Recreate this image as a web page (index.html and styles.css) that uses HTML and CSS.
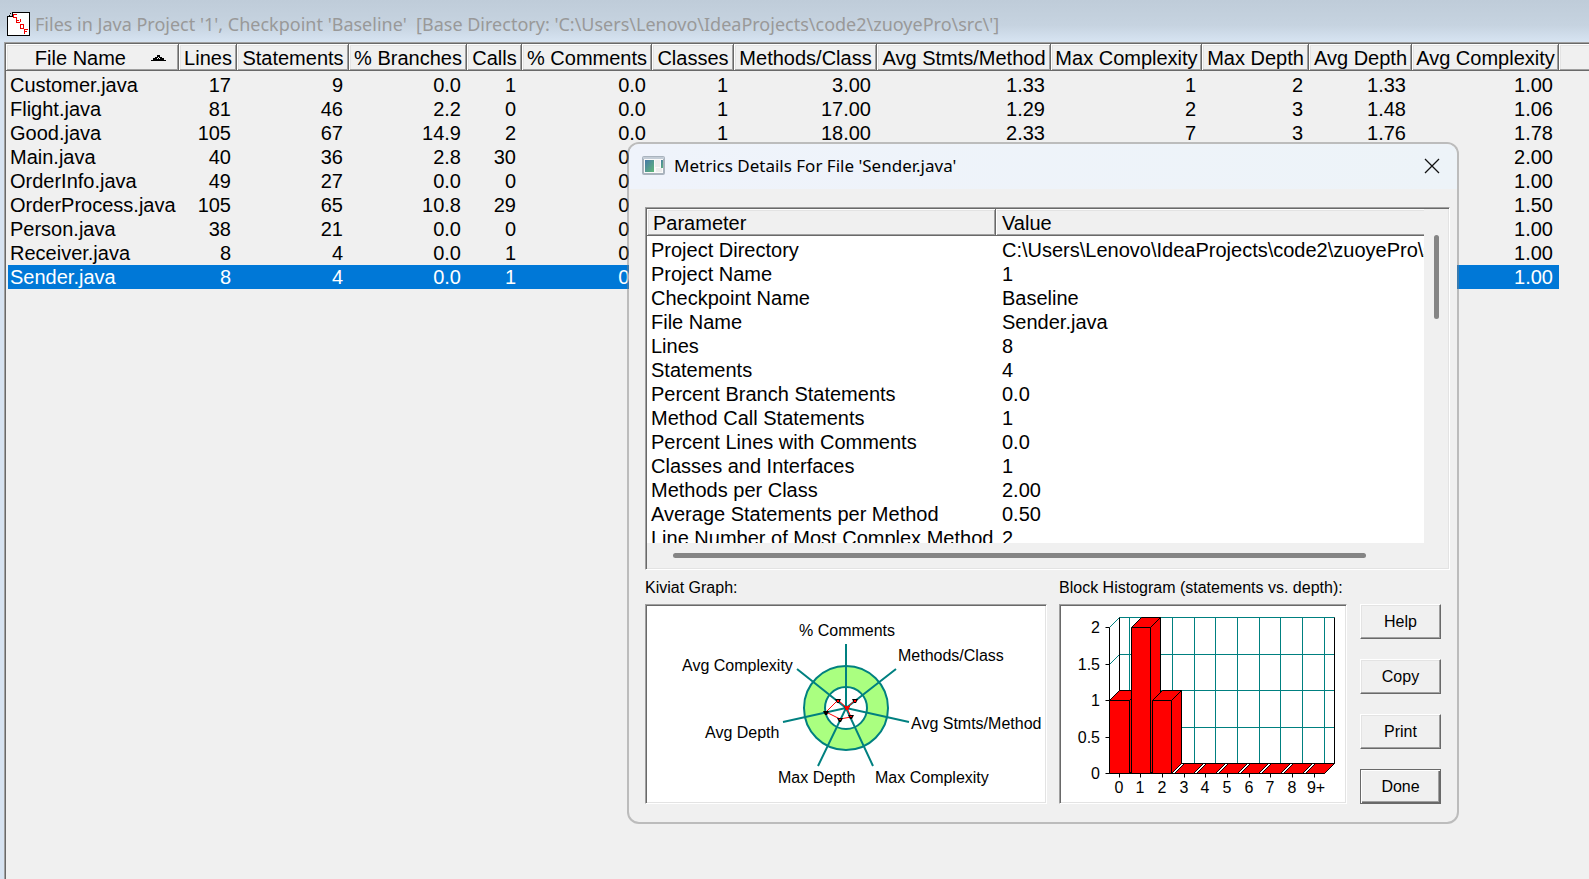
FILE: index.html
```html
<!DOCTYPE html>
<html lang="en">
<head>
  <meta charset="UTF-8" />
  <meta name="viewport" content="width=device-width, initial-scale=1.0"/>
  <title>Files in Java Project '1'</title>
  <link rel="stylesheet" href="styles.css">
</head>
<body>
  <main class="window">
    <header class="window-title">
      <svg class="file-icon" width="23" height="24" viewBox="0 0 23 24" shape-rendering="crispEdges">
        <path d="M5.5 .5H22.5V23.5H.5V4.500H5.500Z" fill="#fff" stroke="#000"/>
        <path d="M3 1h1v1H3zM2 3h1v1H2z" fill="#000"/>
        <path d="M10 2.500H6.500V5.500H10M9.500 6V10.500H13M10 8.500H12M13 7V10M13.500 12.500H16V16.500H13.500ZM17.500 22V17.500H20.500M18 19.500H20" fill="none" stroke="#f00000"/>
      </svg>
      <h1>Files in Java Project '1', Checkpoint 'Baseline'&nbsp; [Base Directory: 'C:\Users\Lenovo\IdeaProjects\code2\zuoyePro\src\']</h1>
    </header>

    <section class="files">
      <table class="file-table">
        <colgroup>
          <col class="c-name"><col class="c-lines"><col class="c-stmts"><col class="c-branch"><col class="c-calls">
          <col class="c-comm"><col class="c-class"><col class="c-meth"><col class="c-avgst"><col class="c-maxc">
          <col class="c-maxd"><col class="c-avgd"><col class="c-avgc"><col>
        </colgroup>
        <thead>
          <tr>
            <th>
              <div class="sorted">File Name
                <svg width="16" height="6" viewBox="0 0 16 6" shape-rendering="crispEdges">
                  <path d="M0 6h15V5h-2V3h-2V2H9V0H6v2H4v1H2v2H0z" fill="#000"/>
                  <path d="M7 2h1v1H7zM6 3h1v1H6zM8 3h1v1H8z" fill="#fff"/>
                </svg>
              </div>
            </th>
            <th>Lines</th><th>Statements</th><th>% Branches</th><th>Calls</th><th>% Comments</th><th>Classes</th>
            <th>Methods/Class</th><th>Avg Stmts/Method</th><th>Max Complexity</th><th>Max Depth</th><th>Avg Depth</th><th>Avg Complexity</th>
            <th class="filler"></th>
          </tr>
        </thead>
        <tbody>
          <tr><td>Customer.java</td><td>17</td><td>9</td><td>0.0</td><td>1</td><td>0.0</td><td>1</td><td>3.00</td><td>1.33</td><td>1</td><td>2</td><td>1.33</td><td>1.00</td></tr>
          <tr><td>Flight.java</td><td>81</td><td>46</td><td>2.2</td><td>0</td><td>0.0</td><td>1</td><td>17.00</td><td>1.29</td><td>2</td><td>3</td><td>1.48</td><td>1.06</td></tr>
          <tr><td>Good.java</td><td>105</td><td>67</td><td>14.9</td><td>2</td><td>0.0</td><td>1</td><td>18.00</td><td>2.33</td><td>7</td><td>3</td><td>1.76</td><td>1.78</td></tr>
          <tr><td>Main.java</td><td>40</td><td>36</td><td>2.8</td><td>30</td><td>0.0</td><td></td><td></td><td></td><td></td><td></td><td></td><td>2.00</td></tr>
          <tr><td>OrderInfo.java</td><td>49</td><td>27</td><td>0.0</td><td>0</td><td>0.0</td><td></td><td></td><td></td><td></td><td></td><td></td><td>1.00</td></tr>
          <tr><td>OrderProcess.java</td><td>105</td><td>65</td><td>10.8</td><td>29</td><td>0.0</td><td></td><td></td><td></td><td></td><td></td><td></td><td>1.50</td></tr>
          <tr><td>Person.java</td><td>38</td><td>21</td><td>0.0</td><td>0</td><td>0.0</td><td></td><td></td><td></td><td></td><td></td><td></td><td>1.00</td></tr>
          <tr><td>Receiver.java</td><td>8</td><td>4</td><td>0.0</td><td>1</td><td>0.0</td><td></td><td></td><td></td><td></td><td></td><td></td><td>1.00</td></tr>
          <tr class="selected"><td>Sender.java</td><td>8</td><td>4</td><td>0.0</td><td>1</td><td>0.0</td><td></td><td></td><td></td><td></td><td></td><td></td><td>1.00</td></tr>
        </tbody>
      </table>
    </section>
  </main>

  <div class="dialog" role="dialog" aria-labelledby="dialogTitle">
    <header class="dialog-title">
      <svg width="23" height="19" viewBox="0 0 23 19">
        <defs>
          <linearGradient id="pane" x1="0" y1="0" x2="1" y2="1">
            <stop offset="0" stop-color="#4678a8"/>
            <stop offset="1" stop-color="#5fb878"/>
          </linearGradient>
        </defs>
        <rect x="1" y="1" width="21" height="17" rx="1" fill="#fafafa" stroke="#a9b3bd" stroke-width="2"/>
        <path d="M1 2h21" stroke="#c3ccd6" stroke-width="2"/>
        <rect x="3" y="4" width="9" height="12" fill="url(#pane)"/>
        <path d="M13 4h5v7h-5zM14 12h6v4h-6z" fill="#ececec"/>
        <path d="M19 4h2v8h-2z" fill="url(#pane)"/>
      </svg>
      <h2 id="dialogTitle">Metrics Details For File 'Sender.java'</h2>
      <button class="close" aria-label="Close">
        <svg width="16" height="16" viewBox="0 0 16 16"><path d="M1 1l14 14M15 1L1 15" stroke="#111" stroke-width="1.300" fill="none"/></svg>
      </button>
    </header>

    <div class="dialog-body">
      <div class="details">
        <div class="details-view">
          <table class="details-table">
            <colgroup><col class="c-param"><col></colgroup>
            <thead><tr><th>Parameter</th><th>Value</th></tr></thead>
            <tbody>
              <tr><td>Project Directory</td><td>C:\Users\Lenovo\IdeaProjects\code2\zuoyePro\src\</td></tr>
              <tr><td>Project Name</td><td>1</td></tr>
              <tr><td>Checkpoint Name</td><td>Baseline</td></tr>
              <tr><td>File Name</td><td>Sender.java</td></tr>
              <tr><td>Lines</td><td>8</td></tr>
              <tr><td>Statements</td><td>4</td></tr>
              <tr><td>Percent Branch Statements</td><td>0.0</td></tr>
              <tr><td>Method Call Statements</td><td>1</td></tr>
              <tr><td>Percent Lines with Comments</td><td>0.0</td></tr>
              <tr><td>Classes and Interfaces</td><td>1</td></tr>
              <tr><td>Methods per Class</td><td>2.00</td></tr>
              <tr><td>Average Statements per Method</td><td>0.50</td></tr>
              <tr><td>Line Number of Most Complex Method</td><td>2</td></tr>
            </tbody>
          </table>
        </div>
        <div class="scroll-v"><div class="thumb"></div></div>
        <div class="scroll-h"><div class="thumb"></div></div>
      </div>

      <div class="bottom">
        <figure class="kiviat">
          <figcaption>Kiviat Graph:</figcaption>
          <div class="plot">
            <svg width="398" height="196" viewBox="0 0 398 196">
              <circle cx="199" cy="102" r="42" fill="#aaff80" stroke="#008080" stroke-width="2"/>
              <circle cx="199" cy="102" r="21" fill="#fff" stroke="#008080" stroke-width="2"/>
              <path d="M199 38V102M249 63L199 102L262 116M226 160L199 102L171 160M136 116L199 102L150 63" fill="none" stroke="#008080" stroke-width="2"/>
              <path d="M200 102L208 94L200 102L204 111L193 113L179 106L191 94Z" fill="none" stroke="#f00" stroke-width="1"/>
              <g fill="#000">
                <path d="M188 93h6l-2 4h-2zM205 93h6l-2 4h-2zM176 105h6l-2 4h-2zM190 112h6l-2 4h-2zM201 109h6l-2 4h-2zM197 100h6l-2 4h-2z"/>
              </g>
              <path d="M197 100h6l-2 4h-2zM190 94h2v2h-2zM207 94h2v2h-2zM192 113h2v1h-2zM203 110h2v1h-2z" fill="#f00"/>
              <text x="152" y="30">% Comments</text>
              <text x="251" y="55">Methods/Class</text>
              <text x="35" y="65">Avg Complexity</text>
              <text x="264" y="123">Avg Stmts/Method</text>
              <text x="58" y="132">Avg Depth</text>
              <text x="131" y="177">Max Depth</text>
              <text x="228" y="177">Max Complexity</text>
            </svg>
          </div>
        </figure>

        <figure class="histogram">
          <figcaption>Block Histogram (statements vs. depth):</figcaption>
          <div class="plot">
            <svg width="284" height="196" viewBox="0 0 284 196">
              <g transform="translate(.5 .5)">
                <!-- back wall grid -->
                <path d="M58 11H273M58 48H273M58 84H273M58 121H273M68 11V157M90 11V157M111 11V157M133 11V157M154 11V157M176 11V157M198 11V157M219 11V157M241 11V157M263 11V157M48 21L58 11M48 58L58 48" fill="none" stroke="#008080"/>
                <!-- axes and ticks -->
                <path d="M58 11V157H273V11M48 21V167H263L273 157M44 21H48M44 58H48M44 94H48M44 131H48M44 167H48M58 167V171M79 167V171M101 167V171M123 167V171M144 167V171M166 167V171M188 167V171M209 167V171M231 167V171M253 167V171" fill="none" stroke="#000"/>
                <g fill="#f00" stroke="#000" stroke-linejoin="round">
                  <path d="M48 167V94L58 84H78V157L68 167ZM48 94H68V167M68 94L78 84"/>
                  <path d="M70 167V21L80 11H99V157L89 167ZM70 21H89V167M89 21L99 11"/>
                  <path d="M91 167V94L101 84H120V157L110 167ZM91 94H110V167M110 94L120 84"/>
                  <path d="M113 167L123 157H142L132 167ZM135 167L145 157H164L154 167ZM157 167L167 157H186L176 167ZM179 167L189 157H207L197 167ZM200 167L210 157H229L219 167ZM222 167L232 157H251L241 167ZM244 167L254 157H273L263 167Z"/>
                </g>
              </g>
              <g text-anchor="end">
                <text x="39" y="27">2</text>
                <text x="39" y="64">1.5</text>
                <text x="39" y="100">1</text>
                <text x="39" y="137">0.5</text>
                <text x="39" y="173">0</text>
              </g>
              <g text-anchor="middle">
                <text x="58" y="187">0</text>
                <text x="79" y="187">1</text>
                <text x="101" y="187">2</text>
                <text x="123" y="187">3</text>
                <text x="144" y="187">4</text>
                <text x="166" y="187">5</text>
                <text x="188" y="187">6</text>
                <text x="209" y="187">7</text>
                <text x="231" y="187">8</text>
                <text x="255" y="187">9+</text>
              </g>
            </svg>
          </div>
        </figure>

        <div class="buttons">
          <button>Help</button>
          <button>Copy</button>
          <button>Print</button>
          <button class="default">Done</button>
        </div>
      </div>
    </div>
  </div>
</body>
</html>
```
FILE: styles.css
```css
* {
  box-sizing: border-box;
}

body {
  margin: 0;
  height: 100vh;
  overflow: hidden;
  background: #d7e3f1;
  color: #000;
  font-family: "Liberation Sans", Arial, sans-serif;
  font-size: 20px;
}

h1, h2, figure {
  margin: 0;
  font-weight: normal;
}

.window {
  display: flex;
  flex-direction: column;
  height: 100%;
}

.window-title {
  display: flex;
  align-items: center;
  gap: 5px;
  height: 42px;
  padding: 6px 7px 0;
  background: linear-gradient(#bfccd9, #c6d3e0 60%, #d7e4f2);
}

.window-title h1 {
  color: #999;
  font-family: "Noto Sans", "Open Sans", sans-serif;
  font-size: 18px;
  white-space: nowrap;
}

.files {
  flex: 1;
  margin-left: 4px;
  border-top: 1px solid #a0a0a0;
  border-left: 1px solid #a0a0a0;
  background: #f0f0f0;
  box-shadow: inset 1px 1px #696969;
  padding: 1px 0 0 1px;
  overflow: hidden;
}

table {
  width: 100%;
  table-layout: fixed;
  border-collapse: separate;
  border-spacing: 0;
}

th {
  height: 29px;
  padding: 0;
  border-bottom: 2px solid transparent;
  background: #f0f0f0;
  background-clip: padding-box;
  box-shadow: inset -1px -1px #696969, inset 1px 1px #fff, inset -2px -2px #a0a0a0, inset 2px 2px #e3e3e3;
  font-weight: normal;
  line-height: 24px;
  white-space: nowrap;
}

th.filler {
  box-shadow: inset 0 -1px #696969, inset 1px 1px #fff, inset 0 -2px #a0a0a0, inset 2px 2px #e3e3e3;
}

td {
  height: 24px;
  padding: 0 6px;
  line-height: 24px;
  text-align: right;
  white-space: nowrap;
}

.c-name { width: 173px; }
.c-lines { width: 58px; }
.c-stmts { width: 112px; }
.c-branch { width: 118px; }
.c-calls { width: 55px; }
.c-comm { width: 130px; }
.c-class { width: 82px; }
.c-meth { width: 143px; }
.c-avgst { width: 174px; }
.c-maxc { width: 151px; }
.c-maxd { width: 107px; }
.c-avgd { width: 103px; }
.c-avgc { width: 147px; }

.sorted {
  display: flex;
  align-items: center;
  justify-content: flex-end;
  gap: 25px;
  padding-right: 12px;
}

.file-table td:first-child {
  padding: 0 0 0 2px;
  border-left: 2px solid transparent;
  background-clip: padding-box;
  text-align: left;
}

.selected td {
  background-color: #0078d7;
  color: #fff;
}

/* details dialog */
.dialog {
  position: absolute;
  top: 142px;
  left: 627px;
  right: 130px;
  border: 2px solid rgba(125, 125, 125, 0.45);
  border-radius: 12px;
  background: #f0f0f0;
  background-clip: padding-box;
  overflow: hidden;
}

.dialog-title {
  display: flex;
  align-items: center;
  gap: 9px;
  height: 45px;
  padding: 0 17px 2px 13px;
  background: linear-gradient(to right, #eff3fb, #edf3f8);
}

.dialog-title h2 {
  flex: 1;
  font-family: "Noto Sans", "Open Sans", sans-serif;
  font-size: 17px;
}

.close {
  display: flex;
  padding: 0;
  border: 0;
  background: none;
}

.dialog-body {
  padding: 18px 7px 18px 16px;
}

.details {
  display: grid;
  grid-template-columns: 1fr 24px;
  grid-template-rows: 334px 25px;
  height: 363px;
  border: 1px solid;
  border-color: #a0a0a0 #fff #fff #a0a0a0;
  box-shadow: inset 1px 1px #696969, inset -1px -1px #e3e3e3;
  padding: 1px;
}

.details-view {
  overflow: hidden;
  background: #fff;
}

.c-param { width: 349px; }

.details-table th {
  padding-left: 6px;
  text-align: left;
}

.details-table th:last-child {
  box-shadow: inset 0 -1px #696969, inset 1px 1px #fff, inset 0 -2px #a0a0a0, inset 0 2px #e3e3e3;
}

.details-table td {
  padding: 0 0 0 4px;
  text-align: left;
}

.details-table td:last-child {
  padding-left: 6px;
}

.thumb {
  border-radius: 3px;
  background: #858585;
}

.scroll-v {
  padding: 26px 9px 0 10px;
}

.scroll-v .thumb {
  width: 5px;
  height: 84px;
}

.scroll-h {
  padding: 10px 58px 0 26px;
}

.scroll-h .thumb {
  height: 5px;
}

.bottom {
  display: flex;
  gap: 12px;
  padding-top: 7px;
  padding-right: 9px;
  font-size: 16px;
}

figcaption {
  height: 27px;
  line-height: 22px;
  white-space: nowrap;
}

.plot {
  border: 1px solid;
  border-color: #a0a0a0 #fff #fff #a0a0a0;
  box-shadow: inset 1px 1px #696969, inset -1px -1px #e3e3e3;
  padding: 1px;
  background: #fff;
}

.plot svg {
  display: block;
  margin: 0 auto;
}

.kiviat {
  flex: 1;
}

.histogram {
  flex: none;
}

.buttons {
  display: flex;
  flex-direction: column;
  gap: 20px;
  width: 81px;
  margin-left: 1px;
  padding-top: 27px;
}

.buttons button {
  height: 35px;
  padding: 0;
  border: 1px solid;
  border-color: #fff #696969 #696969 #fff;
  background: #f0f0f0;
  box-shadow: inset -1px -1px #a0a0a0, inset 1px 1px #e3e3e3;
  font: inherit;
}

.buttons .default {
  border-color: #696969;
  box-shadow: inset 1px 1px #fff, inset -1px -1px #696969, inset -2px -2px #a0a0a0;
}
```
